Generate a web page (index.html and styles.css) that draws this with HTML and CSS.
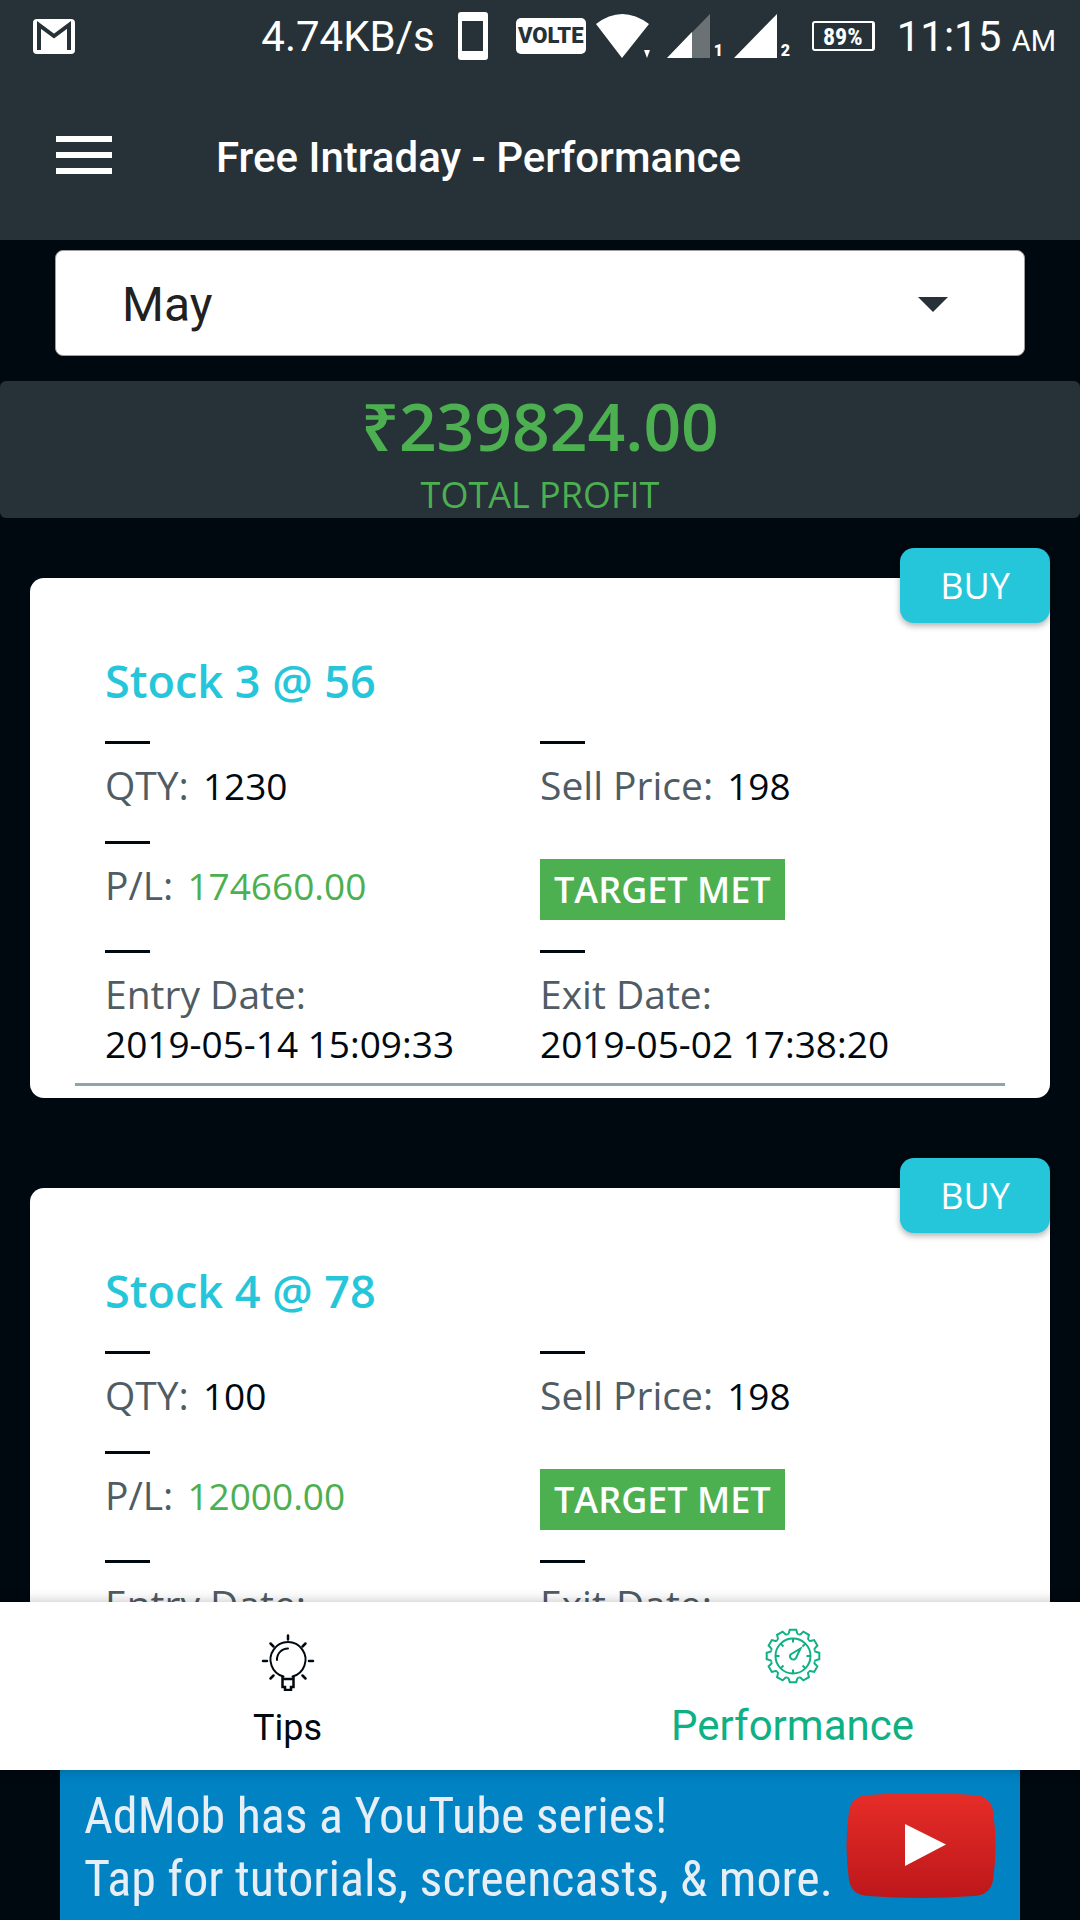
FILE: index.html
```html
<!DOCTYPE html>
<html lang="en">
<head>
	<meta charset="UTF-8">
	<meta name="viewport" content="width=device-width, initial-scale=1.0">
	<title>Free Intraday - Performance</title>
	<link rel="stylesheet" href="styles.css">
</head>
<body>
<div class="status">
	<svg class="mail" width="42" height="35" viewBox="0 0 42 35">
		<rect width="42" height="35" rx="4" fill="#fff"/>
		<path d="M6 31V6l15 11L36 6v25" fill="none" stroke="#263238" stroke-width="4"/>
	</svg>
	<span class="speed">4.74KB/s</span>
	<svg class="phone" width="30" height="48" viewBox="0 0 30 48">
		<path fill="#fff" fill-rule="evenodd" d="M3 0h24a3 3 0 0 1 3 3v42a3 3 0 0 1-3 3H3a3 3 0 0 1-3-3V3a3 3 0 0 1 3-3zM4 9v30h21V9z"/>
	</svg>
	<span class="volte">VOLTE</span>
	<svg class="wifi" width="56" height="44" viewBox="0 0 56 44">
		<path fill="#fff" d="M0 10Q26-10 53 10L26 44zM48 36h6l-3 8z"/>
	</svg>
	<div class="sim">
		<svg width="43" height="44" viewBox="0 0 43 44">
			<path fill="#6a7276" d="M43 0v44H0z"/>
			<path fill="#fff" d="M25 18v26H0z"/>
		</svg>
		<span>1</span>
	</div>
	<div class="sim">
		<svg width="43" height="44" viewBox="0 0 43 44">
			<path fill="#fff" d="M43 0v44H0z"/>
		</svg>
		<span>2</span>
	</div>
	<span class="battery">89%</span>
	<span class="time">11:15 <small>AM</small></span>
</div>

<header class="topbar">
	<button class="menu" aria-label="Menu"><i></i><i></i><i></i></button>
	<h1>Free Intraday - Performance</h1>
</header>

<main class="content">
	<div class="month">
		<select aria-label="Month">
			<option>April</option>
			<option selected>May</option>
			<option>June</option>
		</select>
	</div>

	<section class="profit">
		<p class="amount">₹239824.00</p>
		<p class="caption">TOTAL PROFIT</p>
	</section>

	<article class="card">
		<span class="tag">BUY</span>
		<h2>Stock 3 @ 56</h2>
		<div class="grid">
			<div class="cell"><span class="label">QTY:</span><span class="value">1230</span></div>
			<div class="cell"><span class="label">Sell Price:</span><span class="value">198</span></div>
			<div class="cell"><span class="label">P/L:</span><span class="value green">174660.00</span></div>
			<div class="result"><span class="met">TARGET MET</span></div>
			<div class="cell date"><span class="label">Entry Date:</span><span class="value">2019-05-14 15:09:33</span></div>
			<div class="cell date"><span class="label">Exit Date:</span><span class="value">2019-05-02 17:38:20</span></div>
		</div>
		<hr>
	</article>

	<article class="card">
		<span class="tag">BUY</span>
		<h2>Stock 4 @ 78</h2>
		<div class="grid">
			<div class="cell"><span class="label">QTY:</span><span class="value">100</span></div>
			<div class="cell"><span class="label">Sell Price:</span><span class="value">198</span></div>
			<div class="cell"><span class="label">P/L:</span><span class="value green">12000.00</span></div>
			<div class="result"><span class="met">TARGET MET</span></div>
			<div class="cell date"><span class="label">Entry Date:</span></div>
			<div class="cell date"><span class="label">Exit Date:</span></div>
		</div>
		<hr>
	</article>
</main>

<nav class="tabs">
	<a href="#tips" class="tab">
		<svg width="58" height="58" viewBox="0 0 58 58" fill="none" stroke="#000910" stroke-width="2" stroke-linecap="round">
			<path d="M24.500 43.500A17.500 17.500 0 1 1 33.500 43.500M18 27a11 11 0 0 1 11-11.500"/>
			<path d="M23.500 43v11h2.500v3h6v-3h2.500V43M24 46h10" stroke-width="2.500" stroke-linecap="butt"/>
			<path d="M29 2.500v4M4 28h4M50 28h4M11.500 10.500l3 3M46.500 10.500l-3 3M11.500 45.500l3-3M46.500 45.500l-3-3" stroke-width="2.500"/>
		</svg>
		<span>Tips</span>
	</a>
	<a href="#performance" class="tab active">
		<svg width="58" height="58" viewBox="-29 -29 58 58" fill="none" stroke="#0fb083" stroke-width="2">
			<defs>
				<path id="tooth" d="M-5.800-21.700Q-4.200-21.800-4-23.500L-3.200-26.300H3.200L4-23.500Q4.200-21.800 5.800-21.700"/>
				<path id="tick" d="M0-17.500v4"/>
			</defs>
			<use href="#tooth"/>
			<use href="#tooth" transform="rotate(30)"/>
			<use href="#tooth" transform="rotate(60)"/>
			<use href="#tooth" transform="rotate(90)"/>
			<use href="#tooth" transform="rotate(120)"/>
			<use href="#tooth" transform="rotate(150)"/>
			<use href="#tooth" transform="rotate(180)"/>
			<use href="#tooth" transform="rotate(210)"/>
			<use href="#tooth" transform="rotate(240)"/>
			<use href="#tooth" transform="rotate(270)"/>
			<use href="#tooth" transform="rotate(300)"/>
			<use href="#tooth" transform="rotate(330)"/>
			<circle r="17.500"/>
			<use href="#tick"/>
			<use href="#tick" transform="rotate(45)"/>
			<use href="#tick" transform="rotate(90)"/>
			<use href="#tick" transform="rotate(135)"/>
			<use href="#tick" transform="rotate(180)"/>
			<use href="#tick" transform="rotate(225)"/>
			<use href="#tick" transform="rotate(270)"/>
			<use href="#tick" transform="rotate(315)"/>
			<path d="M-2.500-1.500L7.500-7.500L3 2A3.200 3.200 0 1 1-2.500-1.500z"/>
		</svg>
		<span>Performance</span>
	</a>
</nav>

<a class="ad" href="#ad">
	<span class="adtext">AdMob has a YouTube series!<br>Tap for tutorials, screencasts, &amp; more.</span>
	<svg width="150" height="105" viewBox="0 0 150 108" preserveAspectRatio="none">
		<defs>
			<linearGradient id="red" x1="0" y1="0" x2="0" y2="1">
				<stop offset="0" stop-color="#e62d28"/>
				<stop offset="1" stop-color="#bd171b"/>
			</linearGradient>
		</defs>
		<path fill="url(#red)" d="M22 2Q75-2 128 2Q144 3 147 18Q152 54 147 90Q144 105 128 106Q75 110 22 106Q6 105 3 90Q-2 54 3 18Q6 3 22 2z"/>
		<path fill="#fff" d="M59 32v43l41-22z"/>
	</svg>
</a>
</body>
</html>
```

FILE: styles.css
```css
*{
	box-sizing: border-box;
}
body{
	display: flex;
	flex-direction: column;
	height: 100vh;
	margin: 0;
	background-color: #000910;
	font-family: 'Open Sans', 'Noto Sans', sans-serif;
	overflow: hidden;
}
h1, h2, p{
	margin: 0;
}

/* status bar */
.status{
	display: flex;
	flex: none;
	align-items: center;
	height: 72px;
	padding: 0 24px 0 33px;
	background-color: #263238;
	color: white;
	font-family: Roboto, sans-serif;
	font-size: 42px;
}
.speed{
	margin-left: auto;
}
.phone{
	margin-left: 23px;
}
.volte{
	width: 70px;
	height: 36px;
	margin-left: 28px;
	border-radius: 5px;
	background-color: white;
	color: #263238;
	font-size: 22px;
	font-weight: 900;
	line-height: 36px;
	text-align: center;
}
.wifi{
	margin-left: 10px;
}
.sim{
	display: flex;
	align-items: flex-end;
	gap: 4px;
	width: 56px;
	margin-left: 11px;
	font-size: 16px;
	font-weight: 900;
	line-height: 14px;
}
.sim svg{
	flex: none;
}
.wifi + .sim{
	margin-left: 15px;
}
.battery{
	width: 63px;
	height: 30px;
	margin-left: 22px;
	border: 2px solid white;
	border-right-width: 3px;
	border-radius: 3px;
	font-family: 'Roboto Condensed', Roboto, sans-serif;
	font-size: 24px;
	font-weight: 700;
	line-height: 28px;
	text-align: center;
}
.time{
	margin-left: 22px;
	white-space: nowrap;
}
.time small{
	font-size: 29px;
}

/* title bar */
.topbar{
	display: flex;
	flex: none;
	align-items: center;
	height: 168px;
	padding: 0 56px 2px;
	background-color: #263238;
	color: white;
}
.topbar h1{
	margin-left: 104px;
	padding-top: 6px;
	font-family: Roboto, sans-serif;
	font-size: 42px;
	font-weight: 500;
	line-height: 50px;
}
.menu{
	display: flex;
	flex-direction: column;
	gap: 10px;
	width: 56px;
	padding: 0;
	border: 0;
	background: none;
	cursor: pointer;
}
.menu i{
	height: 6px;
	background-color: white;
}

.content{
	flex: 1;
	min-height: 0;
	overflow: hidden;
}
.month{
	position: relative;
	margin: 10px 55px 25px;
}
.month select{
	display: block;
	width: 100%;
	height: 106px;
	padding: 2px 66px 0;
	border: 1px solid #9e9e9e;
	border-radius: 8px;
	background-color: white;
	color: #212121;
	font-family: Roboto, sans-serif;
	font-size: 48px;
	appearance: none;
}
.month::after{
	content: "";
	position: absolute;
	top: 47px;
	right: 77px;
	border: 15px solid transparent;
	border-top-color: #263238;
	border-bottom: 0;
	pointer-events: none;
}

.profit{
	height: 137px;
	border-radius: 6px;
	background-color: #263238;
	color: #4caf50;
	text-align: center;
}
.amount{
	font-size: 66px;
	font-weight: 600;
	line-height: 88px;
}
.caption{
	font-size: 36px;
	line-height: 52px;
}

/* stock cards */
.card{
	position: relative;
	margin: 60px 30px 90px;
	padding: 73px 0 12px;
	border-radius: 14px;
	background-color: white;
}
.card h2{
	margin: 0 75px 30px;
	color: #26c6da;
	font-size: 45px;
	font-weight: 600;
	line-height: 60px;
}
.tag{
	position: absolute;
	top: -30px;
	right: 0;
	width: 150px;
	height: 75px;
	border-radius: 14px;
	background-color: #26c6da;
	box-shadow: 0 3px 6px rgba(0, 0, 0, 0.3);
	color: white;
	font-size: 36px;
	line-height: 75px;
	text-align: center;
}
.grid{
	display: grid;
	grid-template-columns: 1fr 1fr;
	row-gap: 30px;
	margin: 0 75px;
}
.cell::before{
	content: "";
	display: block;
	width: 45px;
	height: 3px;
	margin-bottom: 16px;
	background-color: #000910;
}
.label, .value{
	line-height: 50px;
}
.label{
	color: #505c63;
	font-size: 39px;
}
.value{
	margin-left: 14px;
	color: #000910;
	font-size: 37px;
}
.green{
	color: #4caf50;
}
.date .label, .date .value{
	display: block;
	margin-left: 0;
}
.result{
	padding-top: 18px;
}
.met{
	display: block;
	width: fit-content;
	padding: 0 14px;
	background-color: #4caf50;
	color: white;
	font-size: 36px;
	font-weight: 600;
	line-height: 61px;
}
hr{
	height: 3px;
	margin: 14px 45px 0;
	border: 0;
	background-color: #90a4ae;
}

/* bottom tabs */
.tabs{
	display: flex;
	flex: none;
	position: relative;
	height: 168px;
	padding: 0 35px;
	background-color: white;
	box-shadow: 0 0 12px rgba(0, 0, 0, 0.25);
	font-family: Roboto, sans-serif;
}
.tab{
	display: flex;
	flex: 1;
	flex-direction: column;
	align-items: center;
	padding-top: 31px;
	color: #000910;
	font-size: 36px;
	line-height: 50px;
	text-decoration: none;
}
.tab span{
	margin-top: 12px;
}
.tab.active{
	padding-top: 25px;
	color: #0fb083;
	font-size: 42px;
}
.tab.active span{
	margin-top: 16px;
}

/* ad banner */
.ad{
	display: flex;
	flex: none;
	align-items: center;
	justify-content: space-between;
	height: 150px;
	margin: 0 60px;
	padding: 0 24px;
	background-color: #0082c3;
	color: #e8eef5;
	font-family: 'Roboto Condensed', Roboto, sans-serif;
	font-size: 50px;
	line-height: 63px;
	text-decoration: none;
	white-space: nowrap;
}
.adtext{
	padding-top: 6px;
}
```
